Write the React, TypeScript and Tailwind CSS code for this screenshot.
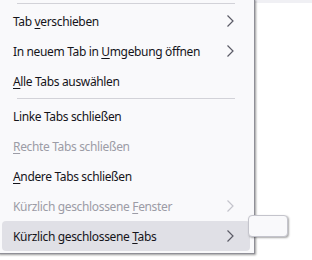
import React from 'react';

type Item = {
  label: React.ReactNode;
  disabled?: boolean;
  submenu?: boolean;
  active?: boolean;
};

const Key: React.FC<{ children: React.ReactNode }> = ({ children }) => (
  <span className="underline underline-offset-2 decoration-1">{children}</span>
);

const GROUP_A: Item[] = [
  { label: <>Tab <Key>v</Key>erschieben</>, submenu: true },
  { label: <>In neuem Tab in <Key>U</Key>mgebung öffnen</>, submenu: true },
  { label: <><Key>A</Key>lle Tabs auswählen</> },
];

const GROUP_B: Item[] = [
  { label: <>Linke Tabs schließen</> },
  { label: <><Key>R</Key>echte Tabs schließen</>, disabled: true },
  { label: <><Key>A</Key>ndere Tabs schließen</> },
  { label: <>Kürzlich geschlossene <Key>F</Key>enster</>, disabled: true, submenu: true },
  { label: <>Kürzlich geschlossene <Key>T</Key>abs</>, submenu: true, active: true },
];

const Chevron: React.FC<{ disabled?: boolean }> = ({ disabled }) => (
  <svg width="8" height="12" viewBox="0 0 8 12" className={disabled ? 'text-[#c4c4cc]' : 'text-[#5b5b66]'}>
    <path d="M1.5 0.5 L7 6 L1.5 11.5" fill="none" stroke="currentColor" strokeWidth="1.2" />
  </svg>
);

const Separator: React.FC = () => <div className="mx-[15px] my-[2px] h-px bg-[#d2d2d8]" />;

const MenuRow: React.FC<{ item: Item }> = ({ item }) => (
  <div
    className={`flex h-[30px] items-center justify-between rounded-[4px] pl-[11px] pr-[16px] ${
      item.active ? 'bg-[#e0e0e6]' : ''
    } ${item.disabled ? 'text-[#9c9ca6]' : 'text-[#15141a]'}`}
  >
    <span className="pt-px tracking-[-0.35px]">{item.label}</span>
    {item.submenu && <Chevron disabled={item.disabled} />}
  </div>
);

export default function App() {
  return (
    <div
      className="relative h-[260px] w-[312px] overflow-hidden bg-white text-[12px]"
      style={{ fontFamily: '"Noto Sans", "Segoe UI", sans-serif' }}
    >
      <div className="absolute left-0 right-0 top-0 h-[3px] bg-[#f0f0f4]" />
      <div className="relative ml-[-2px] mt-[-1px] w-[257px] border-b border-r border-[#8f8f97] bg-[#f9f9fb] px-[4px] pb-[2px] pt-[2px] shadow-[1px_1px_2px_rgba(0,0,0,0.4)]">
        <Separator />
        {GROUP_A.map((item, i) => (
          <MenuRow key={i} item={item} />
        ))}
        <Separator />
        {GROUP_B.map((item, i) => (
          <MenuRow key={i} item={item} />
        ))}
      </div>
      {/* submenu just opening */}
      <div className="absolute left-[248px] top-[215px] h-[22px] w-[40px] rounded-[4px] border border-[#c4c4cc] bg-[#f9f9fb] shadow-[1px_1px_2px_rgba(0,0,0,0.35)]" />
    </div>
  );
}
